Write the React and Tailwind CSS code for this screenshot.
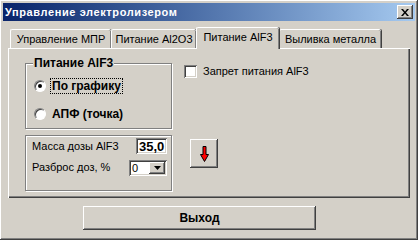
import React, { useState } from "react";

const raised =
  "shadow-[inset_-1px_-1px_#404040,inset_1px_1px_#ffffff,inset_-2px_-2px_#808080,inset_2px_2px_#d4d0c8]";
const sunken =
  "shadow-[inset_1px_1px_#808080,inset_-1px_-1px_#ffffff,inset_2px_2px_#404040,inset_-2px_-2px_#d4d0c8]";
const etched =
  "border border-[#808080] shadow-[1px_1px_0_#ffffff,inset_1px_1px_0_#ffffff]";

const tabs = [
  { label: "Управление МПР", w: "w-[101px]" },
  { label: "Питание Al2O3", w: "w-[85px]" },
  { label: "Питание AlF3", w: "w-[83px]" },
  { label: "Выливка металла", w: "w-[102px]" },
];

// classic radio button
const Radio = ({ checked }) => (
  <div className="w-[12px] h-[12px] rounded-full bg-white border border-t-[#808080] border-l-[#808080] border-b-white border-r-white shadow-[inset_1px_1px_0_#404040] flex items-center justify-center">
    {checked && <div className="w-[4px] h-[4px] rounded-full bg-black" />}
  </div>
);

const App = () => {
  const [active, setActive] = useState(2);
  const [mode, setMode] = useState(0);
  const [ban, setBan] = useState(false);

  return (
    <div
      className={`w-[418px] h-[240px] bg-[#d4d0c8] p-[3px] flex flex-col text-[11px] text-black font-['Liberation_Sans',Arial,sans-serif] ${raised}`}
    >
      {/* Title bar */}
      <div className="h-[18px] flex items-center justify-between bg-gradient-to-r from-[#0a246a] to-[#a6caf0] pl-[2px] pr-[2px]">
        <span className="text-white font-bold text-[11px] leading-none tracking-[0.6px]">
          Управление электролизером
        </span>
        <div
          className={`w-[16px] h-[14px] bg-[#d4d0c8] flex items-center justify-center ${raised}`}
        >
          <svg width="8" height="7" viewBox="0 0 8 7">
            <path d="M0 0h2l2 2.5L6 0h2L5 3.5 8 7H6L4 4.5 2 7H0l3-3.5z" fill="#000" />
          </svg>
        </div>
      </div>

      {/* Tabs */}
      <div className="ml-[5px] mt-[6px] h-[21px] flex items-end pl-[2px]">
        {tabs.map((t, i) => (
          <div
            key={t.label}
            onClick={() => setActive(i)}
            className={`${t.w} ${
              i === active ? "h-[22px] -mb-[1px] relative z-10 pt-[3px]" : "h-[19px] pt-[3px]"
            } bg-[#d4d0c8] rounded-t-[2px] border-t border-l border-white shadow-[inset_-1px_0_#808080,1px_0_#404040] text-center whitespace-nowrap leading-[13px] cursor-default`}
          >
            {t.label}
          </div>
        ))}
      </div>

      {/* Tab panel */}
      <div className="ml-[5px] w-[402px] h-[150px] shadow-[inset_1px_1px_#ffffff,inset_-1px_-1px_#404040,inset_-2px_-2px_#808080] flex pl-[17px] pt-[15px]">
        {/* Left column */}
        <div className="w-[147px] flex flex-col">
          <div className={`relative h-[66px] ${etched}`}>
            <span className="absolute -top-[8px] left-[7px] bg-[#d4d0c8] px-[1px] font-bold text-[12px] leading-[14px]">
              Питание AlF3
            </span>
            <div
              className="flex items-center mt-[14px] ml-[8px] h-[16px]"
              onClick={() => setMode(0)}
            >
              <Radio checked={mode === 0} />
              <span className="ml-[4px] px-[1px] border border-dotted border-black font-bold text-[12px] leading-[14px]">
                По графику
              </span>
            </div>
            <div
              className="flex items-center mt-[12px] ml-[8px] h-[16px]"
              onClick={() => setMode(1)}
            >
              <Radio checked={mode === 1} />
              <span className="ml-[6px] font-bold text-[12px] leading-[14px]">АПФ (точка)</span>
            </div>
          </div>

          <div className={`mt-[6px] h-[56px] flex flex-col pl-[6px] pr-[4px] pt-[2px] ${etched}`}>
            <div className="h-[16px] flex items-center justify-between">
              <span>Масса дозы AlF3</span>
              <div
                className={`w-[31px] h-[16px] bg-white flex items-center pl-[3px] font-bold text-[13px] leading-none ${sunken}`}
              >
                35,0
              </div>
            </div>
            <div className="mt-[6px] h-[15px] flex items-center justify-between">
              <span>Разброс доз, %</span>
              <div className={`w-[38px] h-[16px] bg-white flex p-[2px] ${sunken}`}>
                <span className="flex-1 pl-[1px] leading-[12px]">0</span>
                <div
                  className={`w-[16px] h-[12px] bg-[#d4d0c8] flex items-center justify-center ${raised}`}
                >
                  <svg width="7" height="4" viewBox="0 0 7 4">
                    <path d="M0 0h7L3.5 4z" fill="#000" />
                  </svg>
                </div>
              </div>
            </div>
          </div>
        </div>

        {/* Right column */}
        <div className="ml-[12px] flex flex-col">
          <div className="flex items-center mt-[1px]" onClick={() => setBan(!ban)}>
            <div className={`w-[13px] h-[13px] bg-white ${sunken}`} />
            <span className="ml-[6px] leading-[14px]">Запрет питания AlF3</span>
          </div>
          <div
            className={`ml-[6px] mt-[61px] w-[28px] h-[29px] bg-[#d4d0c8] flex items-center justify-center ${raised}`}
          >
            <svg width="9" height="16" viewBox="0 0 9 16">
              <path
                d="M3 0.5h3v8h2.5L4.5 15.5 0.5 8.5H3z"
                fill="#ff0000"
                stroke="#000"
                strokeWidth="1"
              />
            </svg>
          </div>
        </div>
      </div>

      {/* Exit button */}
      <div
        className={`ml-[80px] mt-[8px] w-[233px] h-[24px] bg-[#d4d0c8] flex items-center justify-center font-bold text-[12px] ${raised}`}
      >
        Выход
      </div>
    </div>
  );
};

export default App;
